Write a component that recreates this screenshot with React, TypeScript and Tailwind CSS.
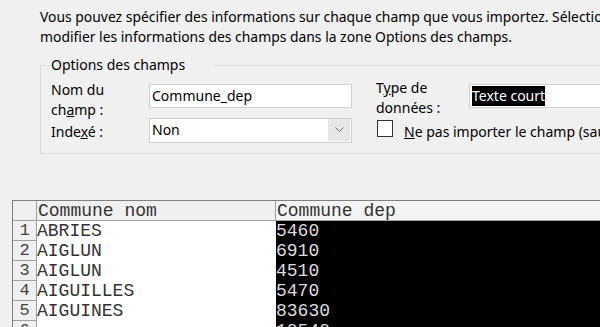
import React from "react";

const ui = { fontFamily: '"Noto Sans", "Open Sans", Arial, sans-serif' };
const mono = { fontFamily: '"Liberation Mono", "Courier New", monospace' };

const rows = [
  ["1", "ABRIES", "5460"],
  ["2", "AIGLUN", "6910"],
  ["3", "AIGLUN", "4510"],
  ["4", "AIGUILLES", "5470"],
  ["5", "AIGUINES", "83630"],
  ["6", "", "10540"],
];

export default function App() {
  return (
    <div
      className="w-[600px] h-[327px] overflow-hidden bg-[#f0f0f0] text-black"
      style={ui}
    >
      <div className="pl-[40px] pt-[7px] text-[13.9px] leading-[20px] whitespace-nowrap">
        <div>
          Vous pouvez spécifier des informations sur chaque champ que vous importez. Sélectionnez
        </div>
        <div>modifier les informations des champs dans la zone Options des champs.</div>
      </div>

      <fieldset className="ml-[40px] mt-[8px] w-[640px] h-[99px] border border-[#dcdcdc] text-[14px] leading-[20px]">
        <legend className="ml-[10px] w-[164px] leading-[20px]">Options des champs</legend>
        <div className="pl-[10px] pt-[5px] flex flex-col">
          <div className="flex items-start h-[41px]">
            <div className="w-[98px]">
              Nom du
              <br />
              ch<span className="underline">a</span>mp :
            </div>
            <div className="mt-[4px] w-[203px] h-[24px] bg-white border border-[#cfcfcf] pl-[2px] leading-[21px]">
              Commune_dep
            </div>
            <div className="ml-[24px] w-[93px] -mt-[2px]">
              T<span className="underline">y</span>pe de
              <br />
              données :
            </div>
            <div className="mt-[4px] flex-1 h-[24px] bg-white border border-[#cfcfcf] pl-[2px] pt-[1px]">
              <span className="bg-black text-white leading-[20px] inline-block">Texte court</span>
            </div>
          </div>
          <div className="flex items-start">
            <div className="w-[98px] pt-[1px]">
              Inde<span className="underline">x</span>é :
            </div>
            <div className="-mt-[3px] w-[203px] h-[25px] bg-white border border-[#cfcfcf] flex">
              <div className="flex-1 pl-[2px] leading-[22px]">Non</div>
              <div className="w-[22px] h-[22px] mr-[1px] bg-[#e6e6e6] flex items-center justify-center">
                <svg width="9" height="6" viewBox="0 0 9 6">
                  <path d="M0.5 0.5 L4.5 4.5 L8.5 0.5" fill="none" stroke="#707070" strokeWidth="1" />
                </svg>
              </div>
            </div>
            <div className="ml-[25px] -mt-[1px] w-[16px] h-[17px] border border-[#333] bg-white" />
            <div className="ml-[11px] whitespace-nowrap pt-[1px]">
              <span className="underline">N</span>e pas importer le champ (sauter)
            </div>
          </div>
        </div>
      </fieldset>

      <div className="mt-[46px] ml-[12px] w-[620px] border-l border-t border-[#808080]" style={mono}>
        <div className="flex h-[20px] bg-[#f0f0f0] border-b border-[#a0a0a0] text-[18px] leading-[20px] text-[#333]">
          <div className="w-[24px] border-r border-[#a0a0a0]" />
          <div className="w-[239px] border-r border-[#a0a0a0] pl-[1px] whitespace-nowrap">Commune nom</div>
          <div className="flex-1 pl-[1px] whitespace-nowrap bg-[#f4f4f4]">Commune dep</div>
        </div>
        {rows.map(([n, nom, dep]) => (
          <div key={n} className="flex h-[20px] text-[18px] leading-[20px]">
            <div className="w-[24px] bg-[#f0f0f0] border-r border-b border-[#a0a0a0] text-center text-[#444] text-[17px]">
              {n}
            </div>
            <div className="w-[239px] bg-white text-[#333] whitespace-nowrap">{nom}</div>
            <div className="flex-1 bg-black text-[#dcdcdc] whitespace-nowrap">{dep}</div>
          </div>
        ))}
      </div>
    </div>
  );
}
